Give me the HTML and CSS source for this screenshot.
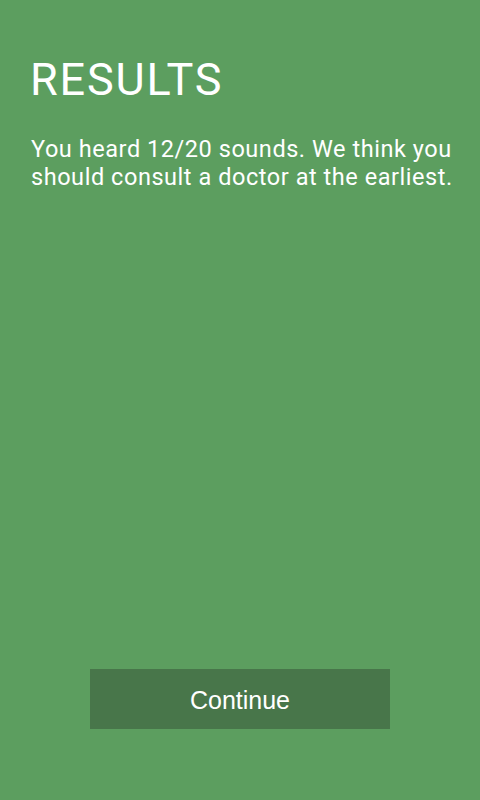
FILE: index.html
```html
<!DOCTYPE html>
<html>
<head>
<meta charset="utf-8">
<link rel="stylesheet" href="styles.css">
</head>
<body>
<div class="screen">
  <div class="content">
    <h1 class="title">RESULTS</h1>
    <p class="message">You heard 12/20 sounds. We think you should consult a doctor at the earliest.</p>
  </div>
  <div class="actions">
    <button class="continue">Continue</button>
  </div>
</div>
</body>
</html>
```
FILE: styles.css
```css
html, body {
  margin: 0;
  padding: 0;
  background: #5c9e5f;
}
.screen {
  width: 480px;
  height: 800px;
  display: flex;
  flex-direction: column;
  justify-content: space-between;
  box-sizing: border-box;
  padding: 0 20px 71px 30px;
  font-family: Roboto, sans-serif;
  color: #ffffff;
}
.content {
  padding-top: 53px;
}
.title {
  margin: 0;
  font-weight: 400;
  font-size: 45px;
  line-height: 54px;
  letter-spacing: 1.8px;
}
.message {
  margin: 28px 0 0 1px;
  font-size: 23.5px;
  line-height: 28px;
  letter-spacing: 0.55px;
}
.actions {
  display: flex;
  justify-content: center;
  padding-right: 10px;
}
.continue {
  width: 300px;
  height: 60px;
  border: none;
  background: #48764a;
  color: #ffffff;
  font-family: "Liberation Sans", Arial, sans-serif;
  font-size: 25px;
  padding: 3px 0 0 0;
}
```
